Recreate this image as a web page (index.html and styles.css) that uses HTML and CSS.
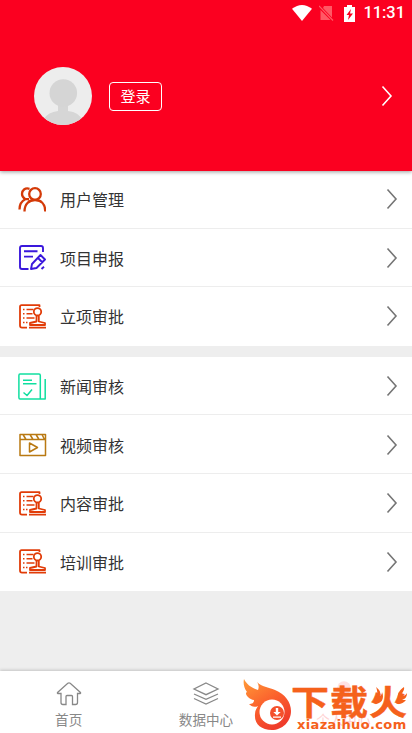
FILE: index.html
```html
<!DOCTYPE html>
<html lang="zh-CN">
<head>
<meta charset="utf-8">
<meta name="viewport" content="width=device-width, initial-scale=1">
<title>个人中心</title>
<link rel="stylesheet" href="styles.css">
</head>
<body>
<svg class="defs" width="0" height="0">
  <symbol id="chevron" viewBox="0 0 12 22"><path d="M1.5 1.5 10 11 1.5 20.5"/></symbol>
  <symbol id="stamp" viewBox="0 0 28 26">
    <path d="M20.5 3V1.2H2.6Q1 1.2 1 3V21.5Q1 23.6 3 23.6H8"/>
    <path d="M4 5.5h1.5M7.5 5.5h7M4 9.8h1.5M7.5 9.8h6M4 14h1.5M7.5 14h8M4 18.5h1.5M7 18.5h1.5" stroke-width="1.4"/>
    <circle cx="18.5" cy="7.8" r="3.7"/>
    <path d="M17.5 11.5V17.5L11 19V21H26V19L19.8 17.5V11.5M10 23.6H27"/>
  </symbol>
</svg>
<header class="profile">
  <div class="status">
    <svg class="wifi" viewBox="0 0 20 16"><path d="M0 3.8Q10-3.8 20 3.8L10 16Z" fill="#fff"/></svg>
    <svg class="sim" viewBox="0 0 15 16"><path d="M5 1H13V12.5L4 3ZM1.5 5 11.5 15H1.5Z" fill="#ff5965"/><path d="M0 1 14 15.5" stroke="#ff5965" stroke-width="1.2"/></svg>
    <svg class="battery" viewBox="0 0 11 17"><path d="M3 0h5v2h3v15H0V2h3Z" fill="#fff"/><path d="M7 4 2.5 10H5L4 15 9 8.5H6Z" fill="#fb0020"/></svg>
    <span class="clock">11:31</span>
  </div>
  <div class="account">
    <svg class="avatar" viewBox="0 0 58 58">
      <clipPath id="round"><circle cx="29" cy="29" r="29"/></clipPath>
      <g clip-path="url(#round)"><path d="M0 0H58V58H0Z" fill="#ededed"/><path d="M24 36H34V44Q45 45 49 54V58H10V52Q14 45 24 44Z" fill="#d6d6d6"/><circle cx="29.3" cy="26" r="13.8" fill="#d5d5d5"/></g>
    </svg>
    <button class="login">登录</button>
    <svg class="chevron light"><use href="#chevron"/></svg>
  </div>
</header>
<main>
  <section class="group">
    <div class="row">
      <svg class="icon users" viewBox="0 0 28 28"><circle cx="17" cy="8" r="5.8"/><path d="M6.5 25.5C6.5 18 11 14 17 14S27.3 18 27.3 25.5M11.5 2.8C7 1.4 4 4.4 4 8Q4 11 7.3 13.2Q1.5 16 1.5 23.5M7.3 13.2H11"/></svg>
      <span class="label">用户管理</span><svg class="chevron"><use href="#chevron"/></svg>
    </div>
    <div class="row">
      <svg class="icon form" viewBox="0 0 28 28"><path d="M24 8V4Q24 2 22 2H3Q1 2 1 4V23Q1 25 3 25H9.5M5 7.3H18.5M5 12.6H14"/><path d="M12 25 13 20 21.5 11 26 15.5 17.5 24ZM19 14 23.5 18.5M22.5 25 25 22.8"/></svg>
      <span class="label">项目申报</span><svg class="chevron"><use href="#chevron"/></svg>
    </div>
    <div class="row">
      <svg class="icon stamp"><use href="#stamp"/></svg>
      <span class="label">立项审批</span><svg class="chevron"><use href="#chevron"/></svg>
    </div>
  </section>
  <section class="group">
    <div class="row">
      <svg class="icon news" viewBox="0 0 28 28"><path d="M2 1H21Q22.3 1 22.3 2.5V26H2Q.9 26 .9 24.5V2.5Q.9 1 2 1ZM27.2 6V26H22M5 7.2h9M5 10.7h13.5M5.5 19.5 9 22.5 14 16.5"/></svg>
      <span class="label">新闻审核</span><svg class="chevron"><use href="#chevron"/></svg>
    </div>
    <div class="row">
      <svg class="icon video" viewBox="0 0 28 28"><path d="M1 3.5H26.5V24.5H1ZM1 8.5H26.5M4 3.5 7 8.5M11 3.5 14 8.5M17 3.5 20 8.5M23 3.5 25.5 8.5M10.5 12 18.5 16.5 10.5 21Z"/></svg>
      <span class="label">视频审核</span><svg class="chevron"><use href="#chevron"/></svg>
    </div>
    <div class="row">
      <svg class="icon stamp"><use href="#stamp"/></svg>
      <span class="label">内容审批</span><svg class="chevron"><use href="#chevron"/></svg>
    </div>
    <div class="row">
      <svg class="icon stamp"><use href="#stamp"/></svg>
      <span class="label">培训审批</span><svg class="chevron"><use href="#chevron"/></svg>
    </div>
  </section>
</main>
<nav class="tabs">
  <div class="tab">
    <svg viewBox="0 0 26 24"><path d="M5 11.5H1.8Q1 11 1.8 10.2L11.8 1.3Q13 .5 14.2 1.3L24.2 10.2Q25 11 24.2 11.5H21.5V20.5Q21.5 22.5 19.5 22.5H16.5V14.5Q16.5 13.5 15.5 13.5H11Q10 13.5 10 14.5V22.5H7Q5 22.5 5 20.5Z"/></svg>
    <span>首页</span>
  </div>
  <div class="tab">
    <svg viewBox="0 0 26 24"><path d="M13 1 25 7 13 12.7 1 7ZM1 12 13 17.4 25 12M1 16.5 13 22 25 16.5"/></svg>
    <span>数据中心</span>
  </div>
  <div class="tab current">
    <svg viewBox="0 0 26 24"><circle cx="14" cy="6" r="6.8"/><path d="M3 23Q4 15 13 15T23 23Z"/></svg>
    <span>个人中心</span>
  </div>
</nav>
<div class="brand">
  <svg class="flame" viewBox="0 0 50 54">
    <defs><linearGradient id="fire" x1="0" y1="0" x2=".6" y2="1"><stop offset="0" stop-color="#ff9b38"/><stop offset=".55" stop-color="#fb602d"/><stop offset="1" stop-color="#ef3c2b"/></linearGradient></defs>
    <path d="M1 0C4 6 9 9 15 11C16 9 16 6 14 3C19 8 25 8 32 11C42 15 48 23 48 32C48 43 39 51 29 51C18 51 11 45 12 35C12 31 14 29 15 27C11 29 8 27 6 25C9 25 11 24 11 21C5 20 1 14 4 13C1 9 0 4 1 0Z" fill="url(#fire)"/>
    <circle cx="29" cy="33" r="12.5" fill="#fff"/><circle cx="34" cy="34" r="7" fill="#f4502c"/>
    <path d="M32.8 29h2.4v4h2.5L34 36.5 30.3 33h2.5ZM30 37.5h8v1.2h-8Z" fill="#fff"/>
  </svg>
  <div class="words">
    <div class="name">下载火</div>
    <div class="site">xiazaihuo.com</div>
  </div>
  <svg class="sparks" viewBox="0 0 36 20"><path d="M4 0C9 4 9 7 7 9C9 9 10 7 10 5C13 12 9 17 3 17C7 14 5 12 2 11C6 10 6 5 4 0ZM32 0C33 4 29 6 29 9C31 10 34 8 35 6C35 10 33 12 30 13L34 13C31 17 26 18 24 16C28 12 22 7 32 0Z"/></svg>
</div>
</body>
</html>
```
FILE: styles.css
```css
* { box-sizing: border-box; }
body {
  margin: 0;
  height: 733px;
  display: flex;
  flex-direction: column;
  overflow: hidden;
  position: relative;
  background: #eee;
  color: #333;
  font-family: "Noto Sans CJK SC", sans-serif;
}
svg { display: block; flex: none; fill: none; }
.defs { position: absolute; }
.profile {
  height: 171px;
  flex: none;
  background: #fb0020;
  box-shadow: 0 1px 4px rgba(0, 0, 0, .4);
  position: relative;
}
.status {
  height: 26px;
  display: flex;
  align-items: center;
  justify-content: flex-end;
  padding-right: 7px;
  color: #fff;
}
.wifi { width: 20px; height: 16px; margin-right: 7px; }
.sim { width: 15px; height: 16px; margin-right: 10px; }
.battery { width: 11px; height: 17px; margin-right: 8px; }
.clock { font: 500 16.4px/26px Roboto, sans-serif; }
.account {
  display: flex;
  align-items: center;
  padding: 41px 19px 0 34px;
}
.avatar { width: 58px; height: 58px; margin-right: 17px; }
.login {
  width: 53px;
  height: 29px;
  padding: 0 0 2px;
  border: 1px solid #fff;
  border-radius: 4px;
  background: none;
  color: #fff;
  font: 15px/25px "Noto Sans CJK SC", sans-serif;
}
.chevron {
  width: 12px;
  height: 22px;
  margin-left: auto;
  stroke: #757575;
  stroke-width: 1.6;
}
.light { stroke: #fff; }
.group { background: #fff; margin-bottom: 11px; }
main { margin-top: -1px; }
.row {
  height: 58.6px;
  padding: 1px 14px 0 18px;
  display: flex;
  align-items: center;
  border-bottom: 1px solid #ededed;
}
.row:last-child { border-bottom-color: #fff; }
.icon { width: 28px; height: 28px; margin-top: 1px; stroke-width: 1.8; stroke-linejoin: round; }
.users { stroke: #d43a08; stroke-width: 2.3; }
.form { stroke: #3a18dc; stroke-width: 1.9; margin-left: 1px; margin-right: -1px; }
.stamp { height: 26px; stroke: #e13c08; margin-left: 1px; margin-right: -1px; }
.news { stroke: #10dfa0; stroke-width: 1.5; }
.video { stroke: #b97912; stroke-width: 1.5; margin-left: 1px; margin-right: -1px; }
.label { margin: 0 0 0 14px; font-size: 16px; line-height: 24px; }
.tabs {
  height: 62px;
  flex: none;
  margin-top: auto;
  display: flex;
  background: #fff;
  box-shadow: 0 -1px 3px rgba(0, 0, 0, .18);
}
.tab {
  flex: 1;
  display: flex;
  flex-direction: column;
  align-items: center;
  padding-top: 11px;
  color: #888;
  font-size: 13.6px;
  line-height: 20px;
}
.tab svg { width: 26px; height: 24px; overflow: visible; stroke: #888; stroke-width: 1.3; }
.tab span { margin-top: 3px; }
.tab.current { color: #ffd3d3; }
.tab.current svg { fill: #ffe1e3; stroke: none; }
.brand {
  position: absolute;
  left: 243px;
  top: 679px;
  display: flex;
  color: #f5611b;
}
.flame { width: 50px; height: 54px; }
.words { margin-left: -2px; white-space: nowrap; }
.name {
  font-size: 38px;
  font-weight: 700;
  line-height: 38px;
  height: 38px;
  letter-spacing: 1px;
  margin-top: 3px;
  transform: scaleY(.9);
  -webkit-text-stroke: .5px #f5611b;
}
.site { font: bold 13px/14px "DejaVu Sans", sans-serif; letter-spacing: .35px; margin: -2px 0 0 6px; }
.sparks {
  position: absolute;
  left: 129px;
  top: 8px;
  width: 36px;
  height: 20px;
  fill: #f5611b;
}
```
